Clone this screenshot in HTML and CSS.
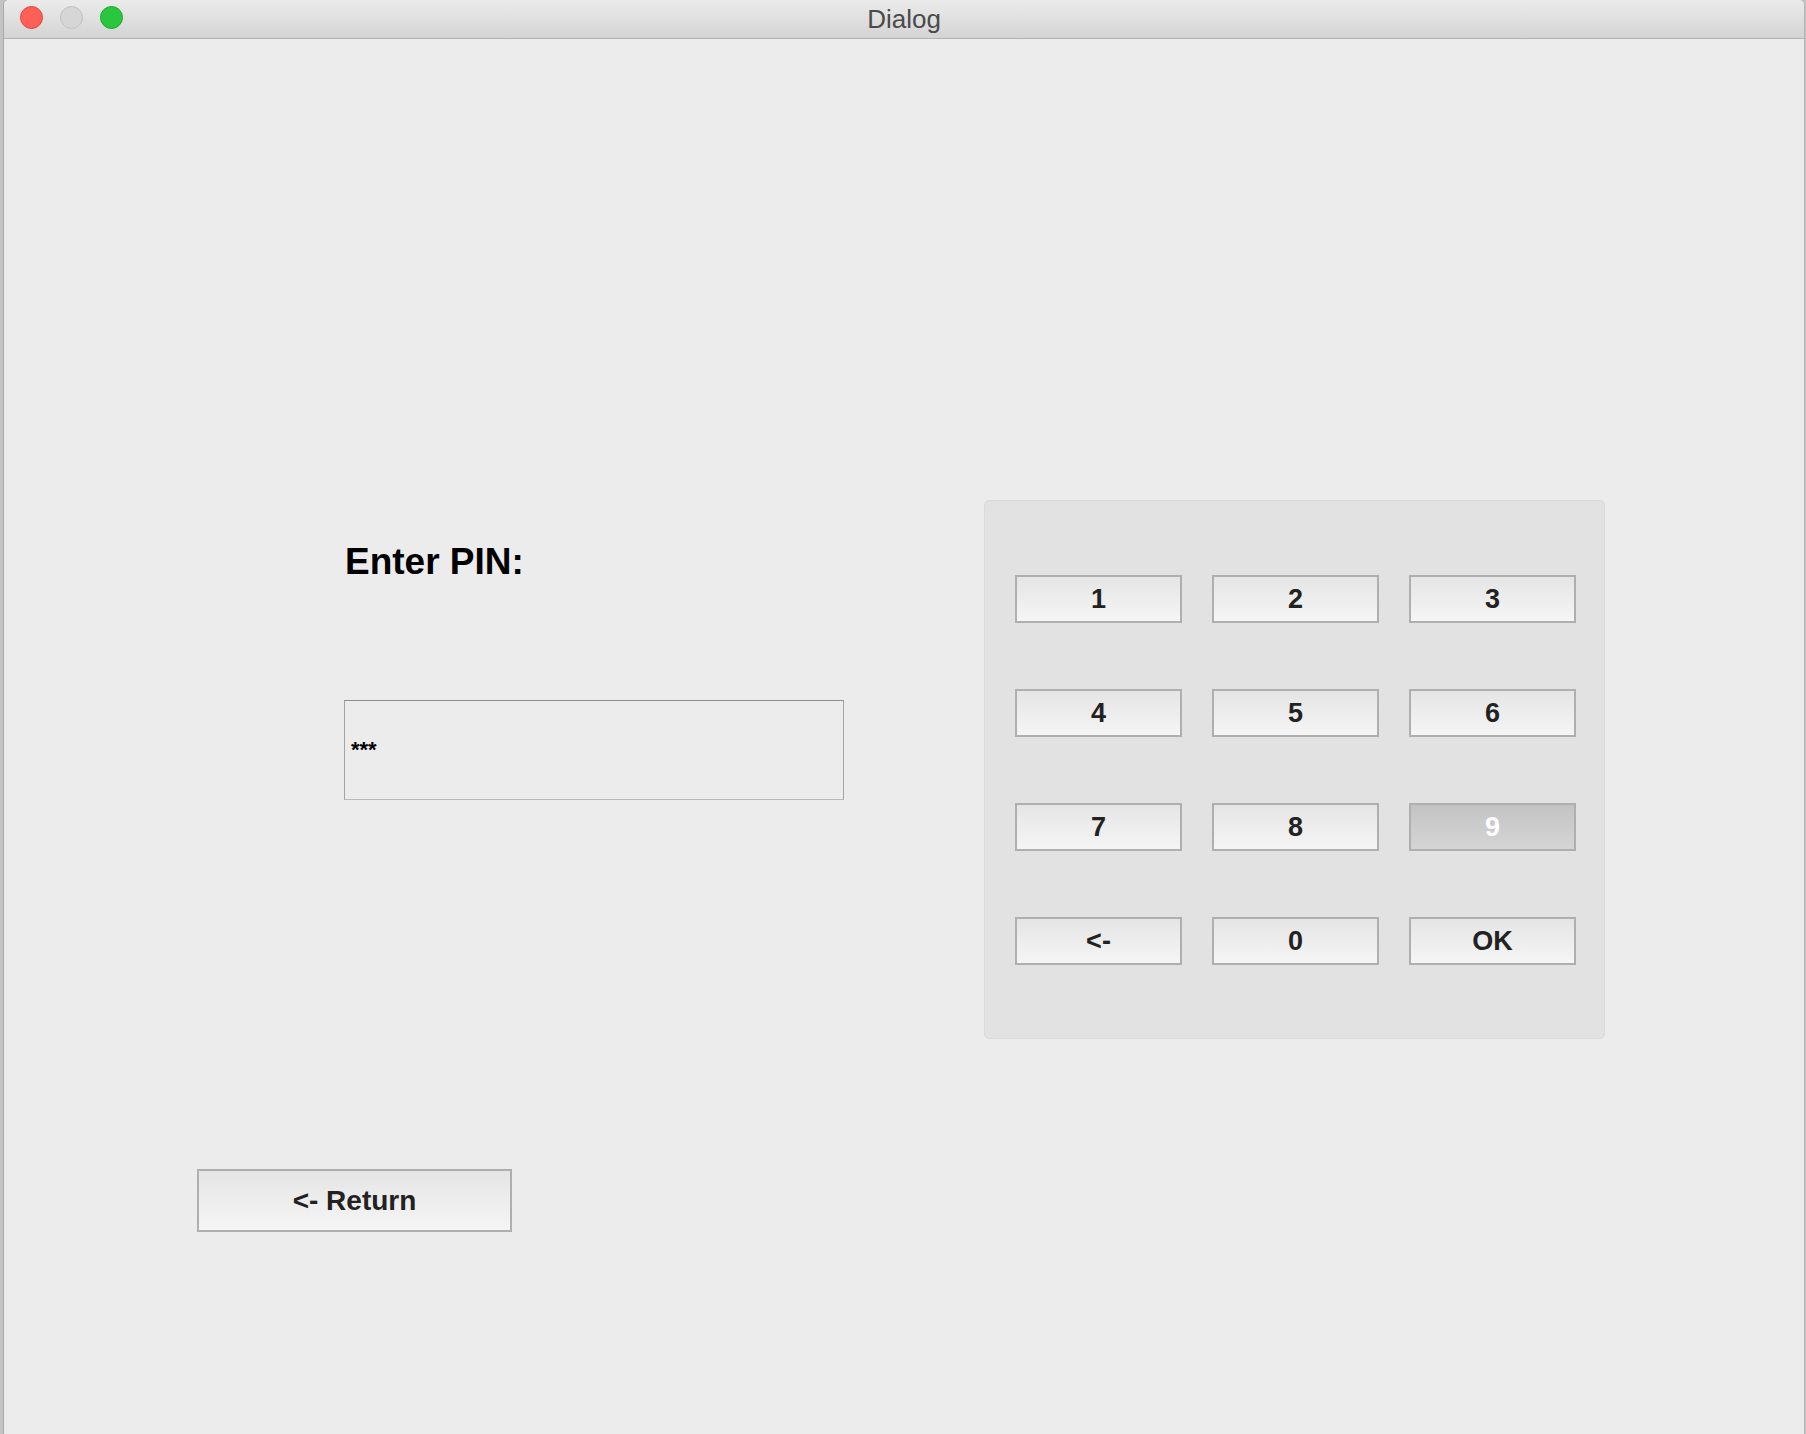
FILE: index.html
```html
<!DOCTYPE html>
<html>
<head>
<meta charset="utf-8">
<title>Dialog</title>
<link rel="stylesheet" href="styles.css">
</head>
<body>
<div class="window">
  <div class="titlebar">
    <div class="lights">
      <span class="light red"></span>
      <span class="light gray"></span>
      <span class="light green"></span>
    </div>
    <div class="title">Dialog</div>
  </div>
  <div class="content">
    <div class="main-row">
      <div class="left-col">
        <div class="pin-label">Enter PIN:</div>
        <div class="pin-input">***</div>
      </div>
      <div class="keypad">
        <button class="key">1</button>
        <button class="key">2</button>
        <button class="key">3</button>
        <button class="key">4</button>
        <button class="key">5</button>
        <button class="key">6</button>
        <button class="key">7</button>
        <button class="key">8</button>
        <button class="key key-pressed">9</button>
        <button class="key">&lt;-</button>
        <button class="key">0</button>
        <button class="key">OK</button>
      </div>
    </div>
    <button class="return-btn">&lt;- Return</button>
  </div>
</div>
</body>
</html>
```
FILE: styles.css
```css
html, body {
  margin: 0;
  padding: 0;
}
body {
  width: 1806px;
  height: 1434px;
  background: #c4c4c4;
  overflow: hidden;
  font-family: "Liberation Sans", Arial, sans-serif;
}
.window {
  margin-left: 4px;
  width: 1800px;
  height: 1434px;
  background: #ececec;
  border-radius: 5px 5px 0 0;
  box-shadow: -1px 0 0 #a9a9a9, 1px 0 0 #b4b4b4;
  display: flex;
  flex-direction: column;
}
.titlebar {
  height: 38px;
  border-bottom: 1px solid #b2b2b2;
  background: linear-gradient(#ebebeb, #d4d4d4);
  border-radius: 5px 5px 0 0;
  display: flex;
  align-items: center;
  justify-content: center;
  position: relative;
}
.lights {
  position: absolute;
  left: 16px;
  top: 6px;
  display: flex;
  gap: 17px;
}
.light {
  width: 21px;
  height: 21px;
  border-radius: 50%;
  display: block;
}
.light.red {
  background: #fe5f57;
  border: 1px solid #e2463f;
}
.light.gray {
  background: #d6d6d6;
  border: 1px solid #c1c1c1;
}
.light.green {
  background: #2ac63f;
  border: 1px solid #1ea72e;
}
.title {
  font-size: 26px;
  color: #4a4a4a;
  font-family: "Liberation Sans", Arial, sans-serif;
  margin-top: 1px;
}
.content {
  padding-top: 461px;
  display: flex;
  flex-direction: column;
  align-items: flex-start;
}
.main-row {
  display: flex;
  align-items: flex-start;
}
.left-col {
  margin-left: 340px;
  padding-top: 44px;
  display: flex;
  flex-direction: column;
}
.pin-label {
  font-size: 37px;
  line-height: 36px;
  font-weight: bold;
  color: #000;
  margin-left: 1px;
}
.pin-input {
  margin-top: 120px;
  width: 488px;
  height: 98px;
  padding-left: 6px;
  padding-right: 4px;
  border: 1px solid #a4a4a4;
  border-top-color: #8c8c8c;
  border-bottom-color: #b9b9b9;
  background: #ececec;
  font-size: 22px;
  font-weight: bold;
  display: flex;
  align-items: center;
  color: #000;
}
.keypad {
  margin-left: 140px;
  width: 561px;
  height: 390px;
  padding: 74px 28px 73px 30px;
  background: #e2e2e2;
  border: 1px solid #d9d9d9;
  border-radius: 5px;
  display: grid;
  grid-template-columns: repeat(3, 167px);
  grid-auto-rows: 48px;
  column-gap: 30px;
  row-gap: 66px;
}
.key, .return-btn {
  box-sizing: border-box;
  border: 2px solid #afafaf;
  background: linear-gradient(#e5e5e5, #f5f5f5);
  font-family: "Liberation Sans", Arial, sans-serif;
  font-weight: bold;
  font-size: 27px;
  color: #222;
  padding: 0;
  margin: 0;
  border-radius: 0;
}
.key {
  width: 167px;
  height: 48px;
}
.key-pressed {
  background: linear-gradient(#c3c3c3, #d5d5d5);
  color: #fff;
}
.return-btn {
  margin-left: 193px;
  margin-top: 130px;
  width: 315px;
  height: 63px;
  font-size: 28px;
}
```
